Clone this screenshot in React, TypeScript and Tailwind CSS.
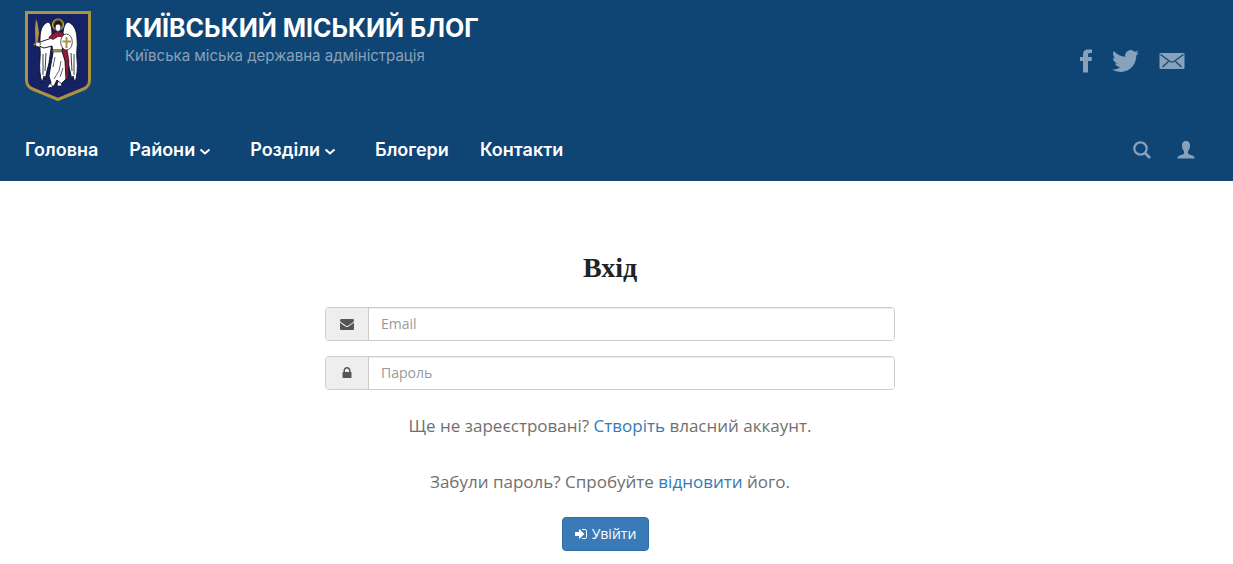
import type { ReactNode } from "react";

function Emblem() {
  return (
    <svg viewBox="0 0 66 90" className="h-[90px] w-[66px]" role="img" aria-label="Герб Києва">
      <path d="M1.5 1.5H64.500V69Q64.500 75.500 58.500 78L33 88.500L7.500 78Q1.500 75.500 1.500 69Z" fill="#152266" stroke="#ad923f" strokeWidth="3" />
      {/* wings */}
      <path d="M23 11C17 13 15 20 15 28C14 36 16 40 15 48C14 57 15 65 17 72L19 65L20 69L22 60L24 52L26 38L27 24C27 17 26 12 23 11Z" fill="#fff" stroke="#080b20" strokeWidth="0.900" />
      <path d="M43 11C49 13 52 20 52 28C53 36 51 40 52 48C53 57 52 65 50 72L48 65L47 69L45 60L43 52L40 38L38 24C38 17 40 12 43 11Z" fill="#fff" stroke="#080b20" strokeWidth="0.900" />
      <path d="M18 43L18 64M21 42L20 60M49 43L49 64M46 42L47 60" fill="none" stroke="#080b20" strokeWidth="0.800" />
      {/* cloak */}
      <path d="M24 26L30 21H37L41 26L42 38L44 50L43 69L39 68L36 44L26 31Z" fill="#8e1c32" stroke="#080b20" strokeWidth="0.600" />
      {/* robe and arm */}
      <path d="M36 25L30 25L24 28L15 31L14 35L19 37L27 35L28 42L26 53L24 65L26 72L24 76L29 75L32 69L36 73L41 68L40 50L37 40L39 29Z" fill="#fff" stroke="#080b20" strokeWidth="0.900" />
      <path d="M25 72L22 77L28 76Z" fill="#fff" stroke="#080b20" strokeWidth="0.700" />
      <path d="M33 70L32 75L37 75L36 72Z" fill="#fff" stroke="#080b20" strokeWidth="0.700" />
      <path d="M30 46L28 56M36 50L34 60L29 68M38 57L35 66" fill="none" stroke="#222" strokeWidth="0.700" />
      <path d="M27.500 38.500H37V41H27.500Z" fill="#af9344" stroke="#1b1b22" strokeWidth="0.400" />
      <path d="M24 27L30 22L37 23L39 26L33 26L28 29Z" fill="#8e1c32" />
      {/* head with halo */}
      <circle cx="33" cy="13.500" r="5.500" fill="#5c4a26" stroke="#c7a737" strokeWidth="1.200" />
      <ellipse cx="33" cy="16.500" rx="2.700" ry="4" fill="#fff" stroke="#17131b" strokeWidth="0.600" />
      <path d="M29 15Q30 10 33 10Q36 10 37 15L35 13.500H31L29.500 17Z" fill="#1d1712" />
      {/* shield */}
      <ellipse cx="41.500" cy="31" rx="5.800" ry="8" fill="#fff" stroke="#17131b" strokeWidth="0.700" />
      <path d="M41.500 26V37M37.500 30.500H46" stroke="#af9344" strokeWidth="2" />
      {/* sword */}
      <path d="M10 17L11 8L12.500 12L14 22L12.500 32H10.500Z" fill="#af9344" />
      <path d="M9 34Q12 31 16 33" fill="none" stroke="#af9344" strokeWidth="2" />
      <path d="M11 31L15 32L15 36L11 35Z" fill="#fff" stroke="#17131b" strokeWidth="0.400" />
    </svg>
  );
}

function Glyph({ d, className }: { d: string; className: string }) {
  return (
    <svg viewBox="0 0 1792 1792" fill="currentColor" className={className} aria-hidden="true">
      <path d={d} />
    </svg>
  );
}

const ENVELOPE =
  "M1792 710v794q0 66-47 113t-113 47h-1472q-66 0-113-47t-47-113v-794q44 49 101 87 362 246 497 345 57 42 92.500 65.500t94.500 48 110 24.500h2q51 0 110-24.500t94.500-48 92.500-65.500q170-123 498-345 57-39 100-87zm0-294q0 79-49 151t-122 123q-376 261-468 325-10 7-42.500 31t-54 38.500-52 32.500-57.500 27-50 9h-2q-23 0-50-9t-57.500-27-52-32.500-54-38.500-42.500-31q-91-64-262-182.500t-205-142.500q-62-42-117-115.500t-55-136.500q0-78 41.500-130t118.500-52h1472q65 0 112.500 47t47.500 113z";
const LOCK =
  "M640 768h512v-192q0-106-75-181t-181-75-181 75-75 181v192zm832 96v576q0 40-28 68t-68 28h-960q-40 0-68-28t-28-68v-576q0-40 28-68t68-28h32v-192q0-184 132-316t316-132 316 132 132 316v192h32q40 0 68 28t28 68z";
const SIGN_IN =
  "M1184 896q0 26-19 45l-544 544q-19 19-45 19t-45-19-19-45v-288h-448q-26 0-45-19t-19-45v-384q0-26 19-45t45-19h448v-288q0-26 19-45t45-19 45 19l544 544q19 19 19 45zm352-352v704q0 119-84.500 203.500t-203.500 84.500h-320q-13 0-22.500-9.500t-9.500-22.500q0-4-1-20t-.5-26.500 3-23.500 10-19.500 20.500-6.500h320q66 0 113-47t47-113v-704q0-66-47-113t-113-47h-312l-11.500-1-11.500-3-8-5.500-7-9-2-13.500q0-4-1-20t-.5-26.500 3-23.500 10-19.500 20.500-6.500h320q119 0 203.500 84.500t84.500 203.500z";

function NavItem({ children, menu = false }: { children: ReactNode; menu?: boolean }) {
  return (
    <li>
      <a href="#" className={menu ? "mr-2 flex items-center gap-1" : "flex items-center"}>
        {children}
        {menu && (
          <svg viewBox="0 0 12 12" className="mt-1 h-3 w-3" fill="none" stroke="currentColor" strokeWidth="2" aria-hidden="true">
            <path d="M1.500 3.500L6 7.500L10.500 3.500" />
          </svg>
        )}
      </a>
    </li>
  );
}

function Field({ id, type, label, icon }: { id: string; type: string; label: string; icon: ReactNode }) {
  return (
    <div className="flex h-[34px] w-full overflow-hidden rounded border border-[#ccc]">
      <label htmlFor={id} aria-label={label} className="flex w-[43px] shrink-0 items-center justify-center border-r border-[#ccc] bg-[#eee] text-[#555]">
        {icon}
      </label>
      <input
        id={id}
        type={type}
        placeholder={label}
        className="min-w-0 flex-1 bg-white px-3 text-sm text-[#555] shadow-[inset_0_1px_1px_rgba(0,0,0,0.075)] outline-none placeholder:text-[#999]"
      />
    </div>
  );
}

export default function App() {
  return (
    <div className="bg-white font-['Open_Sans','Noto_Sans',sans-serif]">
      <header className="bg-[#0e4575] px-[25px] pt-[11px] font-['Inter',sans-serif] text-white">
        <div className="flex items-start justify-between">
          <a href="#" className="flex gap-[34px]">
            <Emblem />
            <div>
              <div className="pt-px text-[25px] leading-8 font-bold">КИЇВСЬКИЙ МІСЬКИЙ БЛОГ</div>
              <div className="text-[15px] leading-6 text-[#87a2ba]">Київська міська державна адміністрація</div>
            </div>
          </a>
          <div className="mt-[38px] mr-[23px] flex items-center text-[#87a2ba]">
            <a href="#" aria-label="Facebook">
              <svg viewBox="0 0 12 24" className="h-6 w-3" fill="currentColor">
                <path d="M12 .5V4H9.500Q8 4 8 5.500V8H12L11.500 12H8V23.500H3V12H0V8H3V5.500Q3 .5 8 .5Z" />
              </svg>
            </a>
            <a href="#" aria-label="Twitter" className="ml-5">
              <svg viewBox="0 2 24 20" className="h-6 w-[27px]" fill="currentColor">
                <path d="M23.950 4.570a10 10 0 0 1-2.820.770 4.960 4.960 0 0 0 2.160-2.720c-.950.550-2 .950-3.130 1.190a4.920 4.920 0 0 0-8.380 4.480C7.690 8.100 4.070 6.130 1.640 3.160a4.920 4.920 0 0 0 1.520 6.570 4.900 4.900 0 0 1-2.230-.620v.060a4.920 4.920 0 0 0 3.950 4.830 5 5 0 0 1-2.210.080 4.940 4.940 0 0 0 4.600 3.420A9.870 9.870 0 0 1 0 19.540a13.990 13.990 0 0 0 7.550 2.210c9.050 0 14-7.500 14-13.980v-.640a9.900 9.900 0 0 0 2.400-2.560Z" />
              </svg>
            </a>
            <a href="#" aria-label="Email" className="ml-5">
              <svg viewBox="0 0 26 16" className="h-4 w-[26px]">
                <rect x=".5" width="25" height="16" rx="1" fill="currentColor" />
                <path d="M1.500 1.500L11 8.500Q13 9.500 15 8.500L24.500 1.500M3.500 14L9.500 8.500M22.500 14L16.500 8.500" fill="none" stroke="#0e4575" strokeWidth="1.200" />
              </svg>
            </a>
          </div>
        </div>
        <nav className="mt-7 flex h-[52px] items-start justify-between pr-[13px]">
          <ul className="flex gap-[31px] pt-[9px] text-[18px] leading-6 font-semibold whitespace-nowrap">
            <NavItem>Головна</NavItem>
            <NavItem menu>Райони</NavItem>
            <NavItem menu>Розділи</NavItem>
            <NavItem>Блогери</NavItem>
            <NavItem>Контакти</NavItem>
          </ul>
          <div className="flex gap-[26px] pt-3 text-[#87a2ba]">
            <button type="button" aria-label="Пошук">
              <svg viewBox="0 0 18 18" className="h-[18px] w-[18px]" fill="none" stroke="currentColor">
                <circle cx="7.500" cy="7.500" r="6.200" strokeWidth="2.200" />
                <path d="M12 12L17 17" strokeWidth="2.800" />
              </svg>
            </button>
            <button type="button" aria-label="Користувач">
              <svg viewBox="0 0 18 18" className="h-[18px] w-[18px]" fill="currentColor">
                <path d="M9 0C6 0 4.800 2 5 5C5.100 7.500 6 9 7 10V12Q7 13 5.500 13.500L2 14.800Q.5 15.500 .2 17.500H17.800Q17.500 15.500 16 14.800L12.500 13.500Q11 13 11 12V10C12 9 12.900 7.500 13 5C13.200 2 12 0 9 0Z" />
              </svg>
            </button>
          </div>
        </nav>
      </header>

      <main className="pt-[69px] pr-[13px] pb-3">
        <form className="mx-auto flex w-full max-w-[570px] flex-col items-center" onSubmit={(e) => e.preventDefault()}>
          <h1 className="font-['Liberation_Serif',serif] text-[28px] leading-9 font-bold text-[#222]">Вхід</h1>
          <div className="mt-[21px] flex w-full flex-col gap-[15px]">
            <Field id="email" type="email" label="Email" icon={<Glyph d={ENVELOPE} className="h-[14px] w-[14px]" />} />
            <Field id="password" type="password" label="Пароль" icon={<Glyph d={LOCK} className="h-[14px] w-[14px]" />} />
          </div>
          <p className="mt-[22px] text-[17px] leading-7 text-[#6f6f6f]">
            Ще не зареєстровані? <a href="#" className="text-[#337ab7]">Створіть</a> власний аккаунт.
          </p>
          <p className="mt-7 text-[17px] leading-7 text-[#6f6f6f]">
            Забули пароль? Спробуйте <a href="#" className="text-[#337ab7]">відновити</a> його.
          </p>
          <button type="submit" className="mt-[21px] mr-[9px] flex h-[34px] items-center gap-[3px] rounded border border-[#2e6da4] bg-[#3a7ab7] px-3 text-sm text-white">
            <Glyph d={SIGN_IN} className="h-[14px] w-[14px]" />
            Увійти
          </button>
        </form>
      </main>
    </div>
  );
}
